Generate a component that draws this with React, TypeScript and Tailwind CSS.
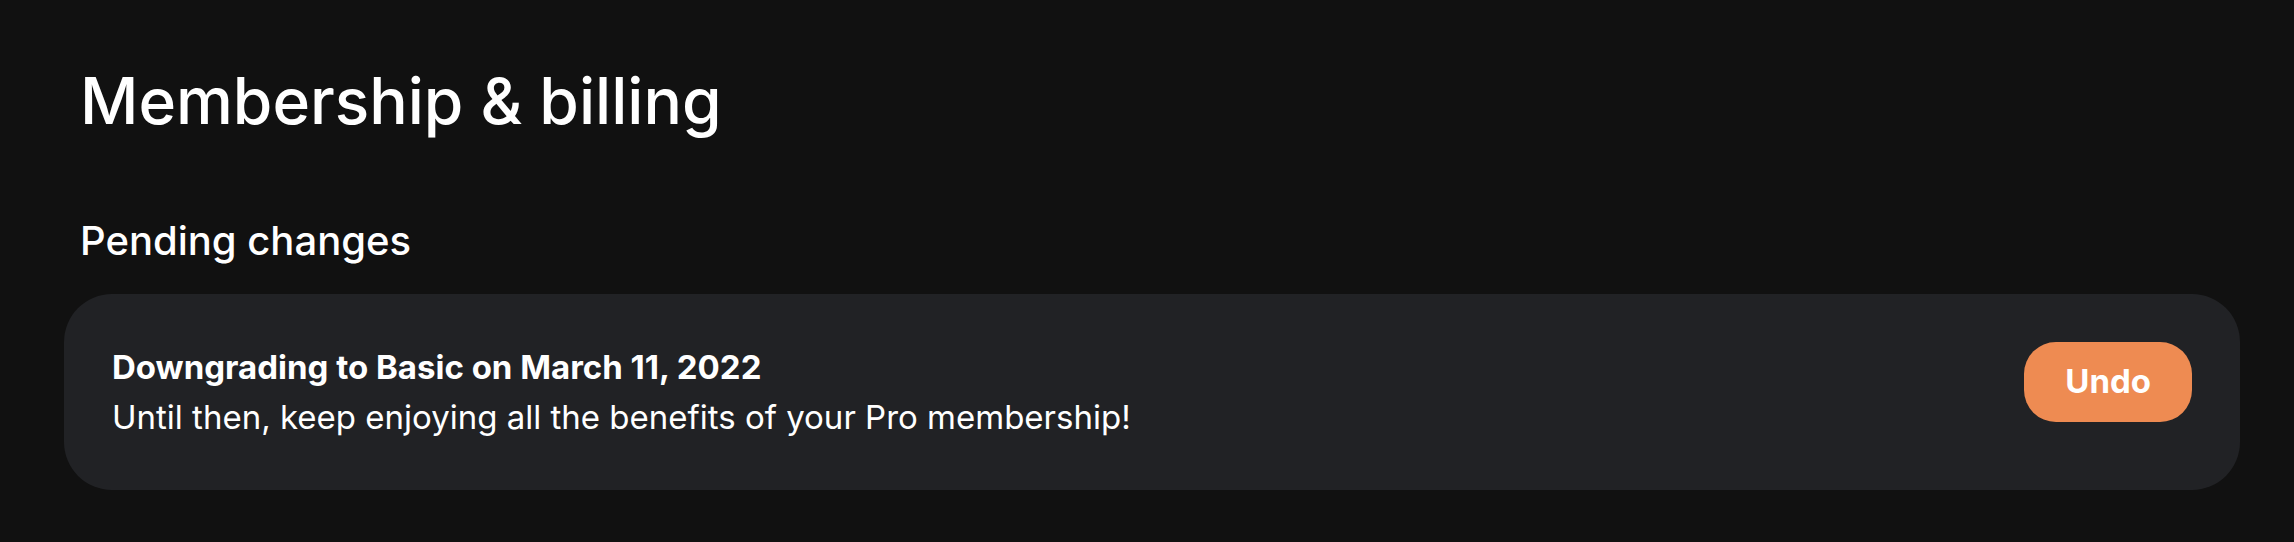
import React from "react";

const PendingChange = () => {
  return (
    <div className="flex items-start justify-between rounded-[48px] bg-[#212225] p-12">
      <div className="flex flex-col text-[33px] leading-[50px] text-white">
        <span className="font-bold">Downgrading to Basic on March 11, 2022</span>
        <span>Until then, keep enjoying all the benefits of your Pro membership!</span>
      </div>
      <button className="h-20 rounded-[32px] bg-[#ee8b52] px-[41px] text-[33px] font-bold text-white">
        Undo
      </button>
    </div>
  );
};

export default function App() {
  return (
    <div
      className="min-h-screen bg-[#111111] pl-16 pr-[54px] pt-[62px] text-white"
      style={{ fontFamily: "Inter, 'Noto Sans', sans-serif" }}
    >
      <h1 className="pl-4 text-[64px] font-medium leading-[77px]">Membership &amp; billing</h1>
      <h2 className="mt-[78px] pl-4 text-[40px] font-medium leading-[48px]">Pending changes</h2>
      <div className="mt-[29px]">
        <PendingChange />
      </div>
    </div>
  );
}
